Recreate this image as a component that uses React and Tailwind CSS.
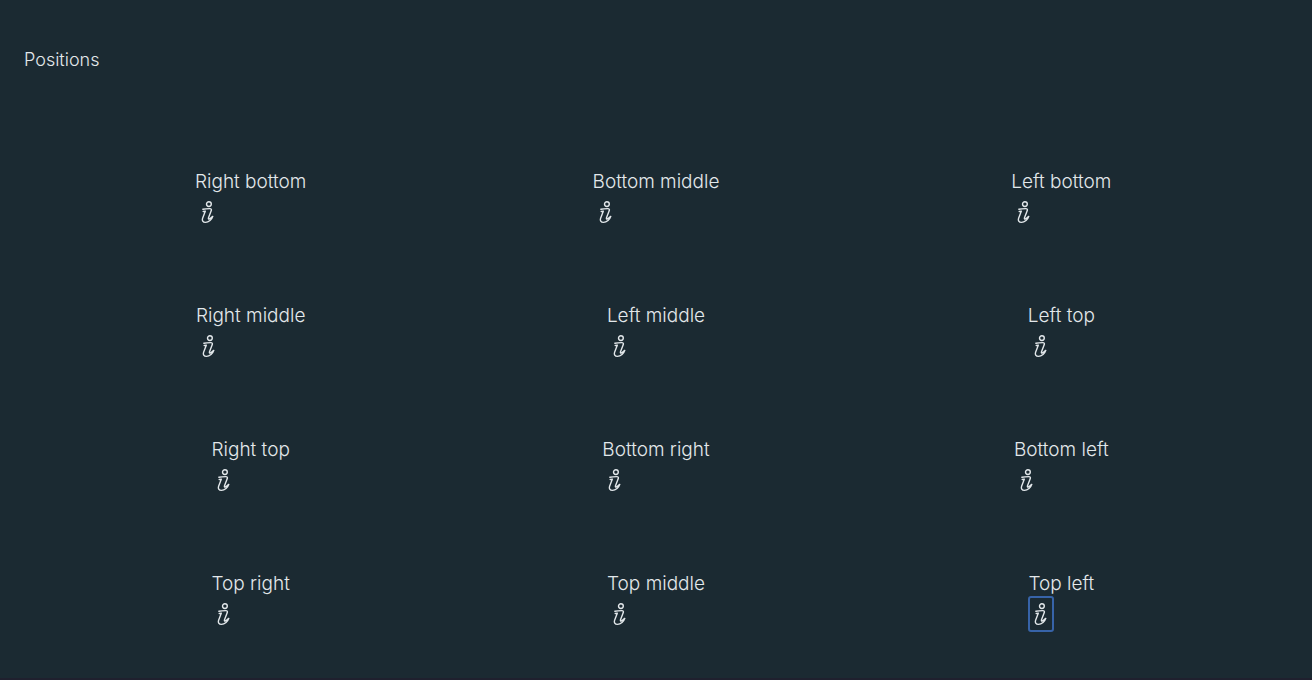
import React from "react";

const positions = [
  "Right bottom",
  "Bottom middle",
  "Left bottom",
  "Right middle",
  "Left middle",
  "Left top",
  "Right top",
  "Bottom right",
  "Bottom left",
  "Top right",
  "Top middle",
  "Top left",
];

function InfoIcon() {
  return (
    <svg
      viewBox="0 0 24 24"
      className="size-6 shrink-0"
      fill="none"
      stroke="currentColor"
      strokeWidth="1.4"
      strokeLinecap="round"
      strokeLinejoin="round"
      aria-hidden="true"
    >
      <circle cx="12.9" cy="4.1" r="2.4" />
      <path d="M6.9 9.3C9.2 8.7 11.6 8.6 13.8 8.6C15.1 8.6 15.7 9.4 15.3 10.6L12.5 17.8C12.1 19 12.6 19.3 13.4 18.8C14.5 18.1 15.4 17.4 16.8 16.4C16 19.2 12.6 22.4 9.5 22.4C6.8 22.4 5.8 20.6 6.6 18.2L9.3 11.2L7.2 11.5" />
    </svg>
  );
}

function Signpost({ label, active }) {
  return (
    <div className="flex flex-col items-start">
      <span className="leading-6">{label}</span>
      <button
        type="button"
        aria-label={label + " information"}
        className={
          active
            ? "flex h-9 w-[26px] items-center justify-center rounded-[3px] border-2 border-[#3763a8]"
            : "flex h-9 w-[26px] items-center justify-center rounded-[3px] border-2 border-transparent"
        }
      >
        <InfoIcon />
      </button>
    </div>
  );
}

export default function App() {
  return (
    <div className="flex min-h-screen flex-col border-b-2 border-[#1f202e] bg-[#1b2a32] font-['Inter',sans-serif] text-[18px] font-light text-[#e3e8eb]">
      <h1 className="px-6 pt-12 leading-6">Positions</h1>
      <main className="grid grid-cols-3 px-12 pt-[61px] text-[19px]">
        {positions.map((label) => (
          <div key={label} className="flex justify-center py-[37px]">
            <Signpost label={label} active={label === "Top left"} />
          </div>
        ))}
      </main>
    </div>
  );
}
